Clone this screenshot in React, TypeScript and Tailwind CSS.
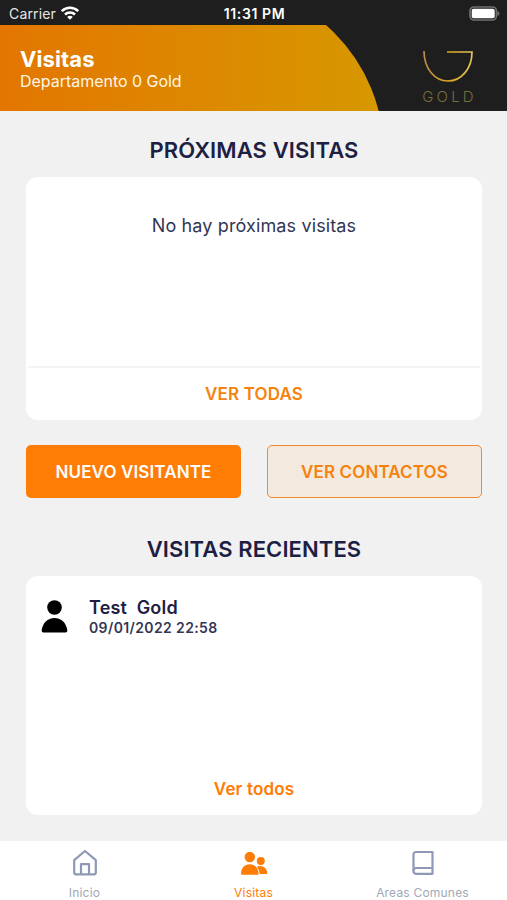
import { ReactNode } from 'react'

interface Tab {
  label: string
  icon: ReactNode
  active?: boolean
}

const tabs: Tab[] = [
  {
    label: 'Inicio',
    icon: (
      <svg width="26" height="28" viewBox="0 0 26 28" fill="none" stroke="currentColor" strokeWidth="2.2" strokeLinejoin="round">
        <path d="M2.2 11.2 13 2l10.8 9.2v12.3a1.8 1.8 0 0 1-1.8 1.8H4a1.8 1.8 0 0 1-1.8-1.8z" />
        <path d="M9 25V15.2h8V25" />
      </svg>
    ),
  },
  {
    label: 'Visitas',
    active: true,
    icon: (
      <svg width="28" height="28" viewBox="0 0 28 28" fill="currentColor">
        <circle cx="9.8" cy="8" r="5.2" />
        <path d="M1 24.8c.2-6 3.6-9.6 8.8-9.6s8.6 3.6 8.8 9.6c0 .6-.2.9-.8.9h-16c-.6 0-.8-.3-.8-.9z" />
        <circle cx="20.8" cy="12" r="4" />
        <path d="M16.8 17.8c4.5-2.3 10.300.6 10.400 6.400 0 .5-.2.800-.7.800h-6.900c-.2-2.800-1.100-5.400-2.800-7.200z" />
      </svg>
    ),
  },
  {
    label: 'Areas Comunes',
    icon: (
      <svg width="24" height="28" viewBox="0 0 24 28" fill="none" stroke="currentColor" strokeWidth="2.2" strokeLinejoin="round">
        <path d="M21.5 3H5a2.5 2.5 0 0 0-2.500 2.500v16.500a2.800 2.800 0 0 0 2.500 2.800h16.500z" />
        <path d="M2.5 21.8a2.800 2.800 0 0 1 2.500-2.800h16.500" />
      </svg>
    ),
  },
]

function StatusBar() {
  return (
    <div className="grid h-[25px] grid-cols-3 items-center bg-[#1e1e1e] pt-px pr-[7px] pl-[9px] text-[14px] text-white">
      <div className="flex items-center gap-[5px]">
        <span className="tracking-[0.15px] text-[#e6e6e6]">Carrier</span>
        <svg width="18" height="14" viewBox="0 0 18 14" fill="none" stroke="currentColor" strokeWidth="2.6">
          <path d="M.8 5.2a11.6 11.6 0 0 1 16.4 0" />
          <path d="M4 8.5a7.2 7.2 0 0 1 10 0" />
          <path d="M9 13.8 6.2 11a3.9 3.9 0 0 1 5.6 0z" fill="currentColor" stroke="none" />
        </svg>
      </div>
      <span className="text-center font-semibold tracking-[0.6px]">11:31 PM</span>
      <svg className="justify-self-end" width="31" height="15" viewBox="0 0 31 15">
        <rect x="1" y="1" width="26.4" height="13" rx="4" fill="none" stroke="#707070" strokeWidth="1.7" />
        <rect x="2.7" y="2.7" width="23" height="9.6" rx="2" fill="#fff" />
        <path d="M28.5 5v5c1.200-.5 1.900-1.400 1.900-2.500s-.7-2-1.900-2.500z" fill="#777" />
      </svg>
    </div>
  )
}

function Header() {
  return (
    <header className="relative flex h-[86px] justify-between overflow-hidden bg-[#1e1e1e]">
      {/* Curved gradient behind the title */}
      <div className="absolute -top-[42px] -left-[120px] h-[340px] w-[504px] rounded-r-[170px] bg-linear-to-r from-[#e37600] from-24% to-[#d69800]" />
      <div className="relative pt-[21px] pl-5 text-white">
        <h1 className="text-[22px] leading-[26px] font-bold tracking-[0.1px]">Visitas</h1>
        <p className="text-[16px] leading-[19px] tracking-[-0.03px] text-[#fff6e6]">Departamento 0 Gold</p>
      </div>
      <div className="relative mt-[24px] mr-[32px] flex w-[54px] flex-col items-center">
        <svg width="54" height="36" viewBox="0 0 54 36" fill="none">
          <defs>
            <linearGradient id="gold" x1="0" y1="0" x2="1" y2="0">
              <stop offset="0" stopColor="#b98a4a" />
              <stop offset="0.5" stopColor="#dca51d" />
              <stop offset="1" stopColor="#e3c460" />
            </linearGradient>
          </defs>
          <path d="M3 2C3 20 14 32 27 32S51 20 51 3H26" stroke="url(#gold)" strokeWidth="1.7" />
        </svg>
        <span className="mt-[3px] -mr-[3px] text-[15px] leading-[18px] font-light tracking-[3.2px] text-[#77703c]">GOLD</span>
      </div>
    </header>
  )
}

function SectionTitle({ children }: { children: ReactNode }) {
  return (
    <h2 className="text-center text-[22px] leading-7 font-semibold tracking-[0.1px] text-[#1d2042]">{children}</h2>
  )
}

export default function App() {
  return (
    <div className="flex h-[900px] w-full flex-col bg-[#f1f1f1] font-['Inter',sans-serif] text-[#1d2042]">
      <StatusBar />
      <Header />

      <main className="flex-1 pt-[25px] pr-[25px] pl-[26px]">
        <SectionTitle>PRÓXIMAS VISITAS</SectionTitle>
        <div className="mt-[13px] flex h-[243px] flex-col rounded-xl bg-white">
          <p className="flex-1 pt-[37px] text-center text-[18px] leading-6 tracking-[0.13px] text-[#333653]">
            No hay próximas visitas
          </p>
          <button className="mx-[2px] h-[54px] border-t-2 border-[#f3f3f3] pt-px text-[17px] font-semibold tracking-[0.13px] text-[#f5820d]">
            VER TODAS
          </button>
        </div>

        <div className="mt-[25px] grid grid-cols-2 gap-[26px] text-[17px] font-semibold tracking-[0.12px]">
          <button className="h-[53px] rounded-[5px] bg-[#ff7c05] pt-[2px] text-white">NUEVO VISITANTE</button>
          <button className="h-[53px] rounded-[5px] border border-[#f08a30] bg-[#f3e9de] pt-[2px] text-[#f5820d]">
            VER CONTACTOS
          </button>
        </div>

        <div className="mt-[37px]">
          <SectionTitle>VISITAS RECIENTES</SectionTitle>
        </div>
        <div className="mt-[13px] flex h-[239px] flex-col rounded-xl bg-white">
          <div className="flex flex-1 gap-[21px] pt-[21px] pl-[15px]">
            <svg className="mt-[3px]" width="27" height="33" viewBox="0 0 27 33" fill="#000">
              <circle cx="13.5" cy="7.5" r="7.3" />
              <path d="M.7 30.5C1.5 23 6.5 18 13.5 18s12 5 12.8 12.5c.1 1.2-.6 2-1.8 2h-22c-1.200 0-1.900-.8-1.800-2z" />
            </svg>
            <div>
              <p className="text-[18px] leading-[22px] font-semibold tracking-[0.2px] whitespace-pre">{'Test  Gold'}</p>
              <p className="text-[14px] leading-[18px] font-semibold tracking-[0.38px] text-[#333653]">09/01/2022 22:58</p>
            </div>
          </div>
          <button className="h-[52px] pt-px text-[17px] font-semibold tracking-[0.15px] text-[#ff7c05]">Ver todos</button>
        </div>
      </main>

      <nav className="grid h-[59px] grid-cols-3 bg-white">
        {tabs.map(tab => (
          <button
            key={tab.label}
            className={`flex flex-col items-center pt-[8px] ${tab.active ? 'text-[#ff7c05]' : 'text-[#8f99b5]'}`}
          >
            {tab.icon}
            <span className={`mt-[8px] text-[12px] leading-4 tracking-[0.2px] ${tab.active ? '' : 'text-[#a2a8b5]'}`}>{tab.label}</span>
          </button>
        ))}
      </nav>
    </div>
  )
}
